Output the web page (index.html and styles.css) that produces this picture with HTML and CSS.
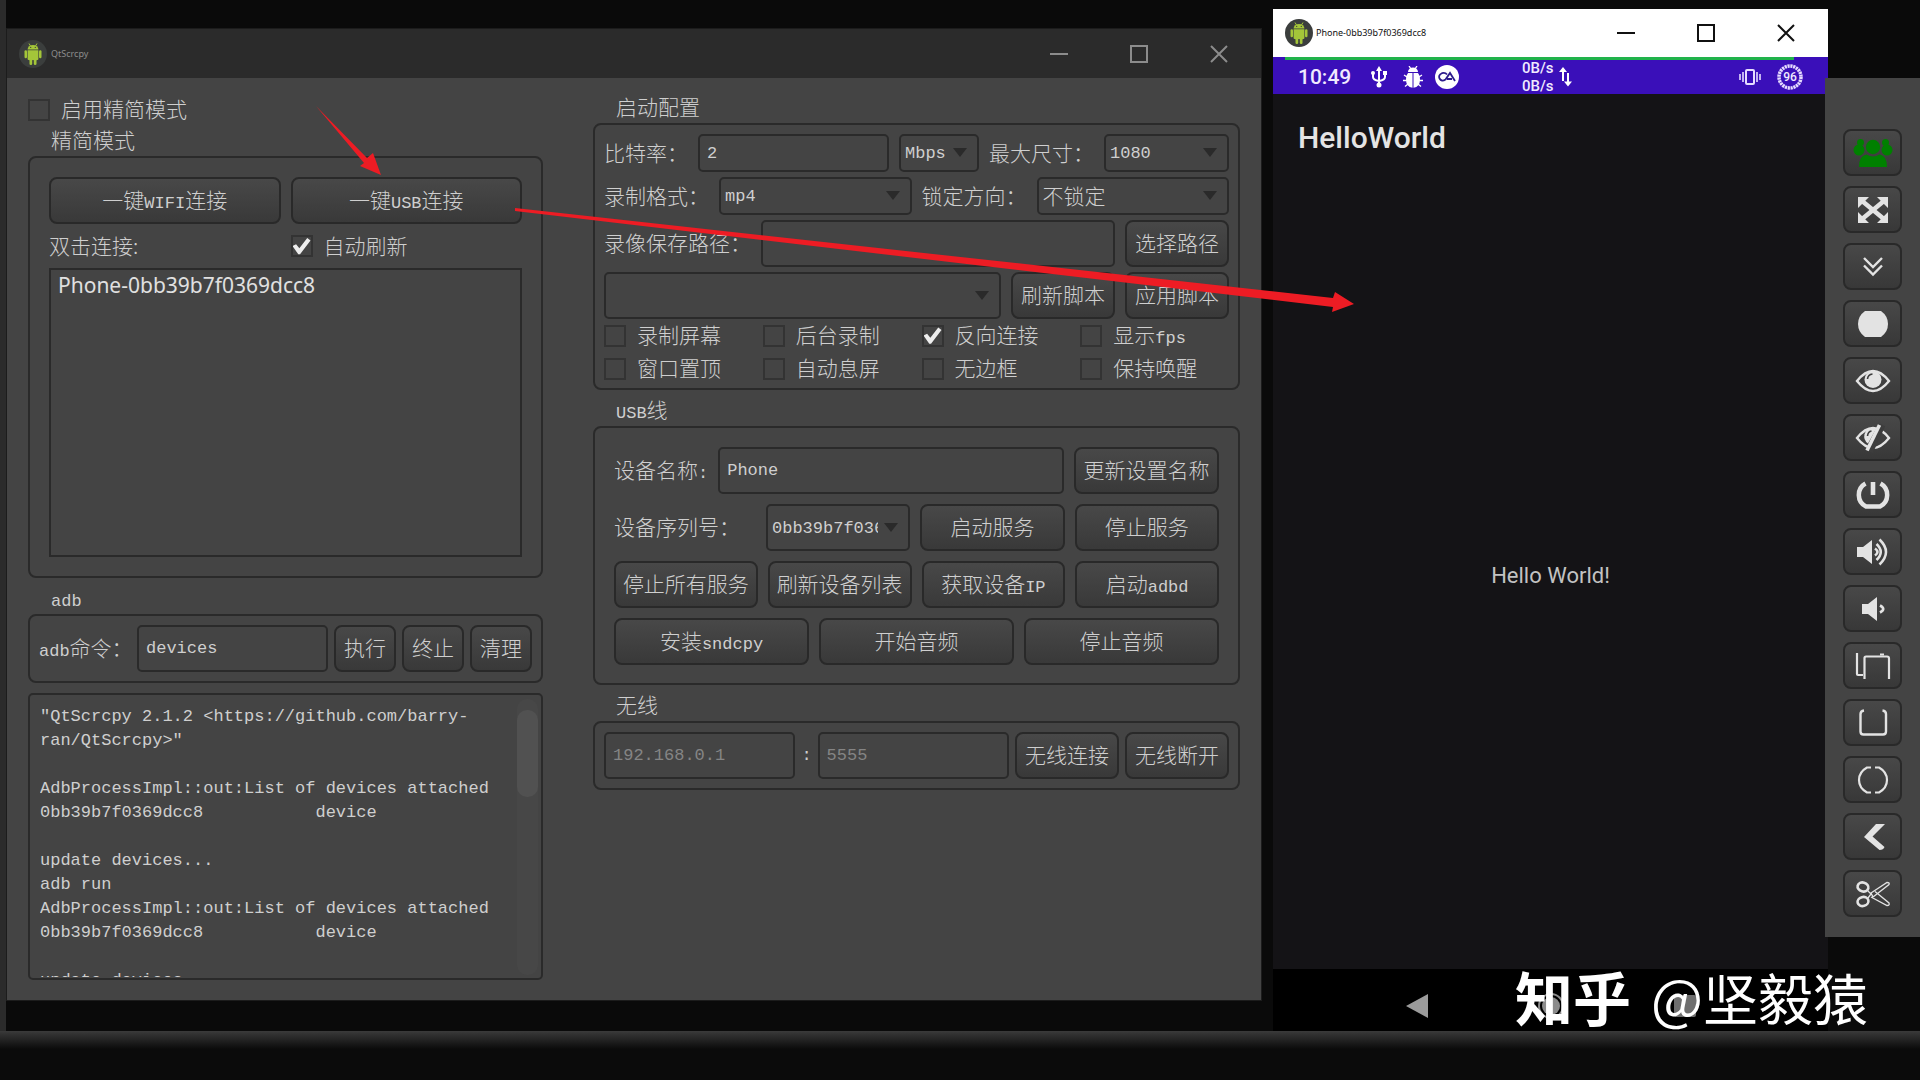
FILE: index.html
```html
<!DOCTYPE html>
<html lang="zh-CN">
<head>
<meta charset="utf-8">
<meta name="viewport" content="width=device-width, initial-scale=1">
<title>QtScrcpy</title>
<link rel="stylesheet" href="styles.css">
</head>
<body>
<svg class="defs" aria-hidden="true">
  <symbol id="android" viewBox="0 0 28 28">
    <circle cx="14" cy="14" r="14" fill="#3b3e3d"/>
    <g fill="#a4c639">
      <path d="M8.600 9.500a5.400 4.600 0 0 1 10.800 0z"/>
      <path d="M10 3.500l1.500 2.500M18 3.500l-1.500 2.500" stroke="#a4c639" stroke-width="1"/>
      <path d="M8.600 10.300h10.800v8.700a1 1 0 0 1-1 1h-8.800a1 1 0 0 1-1-1z"/>
      <rect x="5.500" y="10.300" width="2.500" height="8" rx="1.200"/>
      <rect x="20" y="10.300" width="2.500" height="8" rx="1.200"/>
      <rect x="10.500" y="19" width="2.700" height="6" rx="1.300"/>
      <rect x="14.800" y="19" width="2.700" height="6" rx="1.300"/>
    </g>
    <circle cx="11.700" cy="7.400" r=".6" fill="#3b3e3d"/><circle cx="16.300" cy="7.400" r=".6" fill="#3b3e3d"/>
  </symbol>
  <symbol id="win-min" viewBox="0 0 20 20"><path d="M1 10h18" stroke="currentColor" stroke-width="2"/></symbol>
  <symbol id="win-max" viewBox="0 0 20 20"><path d="M2 2h16v16H2z" fill="none" stroke="currentColor" stroke-width="2"/></symbol>
  <symbol id="win-close" viewBox="0 0 20 20"><path d="M2 2l16 16M18 2L2 18" stroke="currentColor" stroke-width="2"/></symbol>
</svg>

<div class="desktop">
  <main class="window main-window">
    <header class="titlebar">
      <svg class="app-icon"><use href="#android"/></svg>
      <h1 class="win-title">QtScrcpy</h1>
      <div class="win-buttons">
        <button aria-label="最小化"><svg><use href="#win-min"/></svg></button>
        <button aria-label="最大化"><svg><use href="#win-max"/></svg></button>
        <button aria-label="关闭"><svg><use href="#win-close"/></svg></button>
      </div>
    </header>
    <div class="content">
      <div class="column">
        <label class="check simple-check"><input type="checkbox"><span>启用精简模式</span></label>
        <h2 class="caption">精简模式</h2>
        <section class="group roomy simple">
          <div class="row wide">
            <button class="btn grow">一键<span class="lat">WIFI</span>连接</button>
            <button class="btn grow">一键<span class="lat">USB</span>连接</button>
          </div>
          <div class="row connect">
            <span class="half">双击连接<span>:</span></span>
            <label class="check half"><input type="checkbox" checked><span>自动刷新</span></label>
          </div>
          <ul class="devices"><li>Phone-0bb39b7f0369dcc8</li></ul>
        </section>
        <h2 class="caption spaced"><span class="lat">adb</span></h2>
        <section class="group">
          <div class="row tight">
            <label class="adb-label" for="cmd"><span class="lat">adb</span>命令：</label>
            <input class="field grow" id="cmd" type="text" value="devices">
            <button class="btn small">执行</button>
            <button class="btn small">终止</button>
            <button class="btn small">清理</button>
          </div>
        </section>
        <div class="log">
          <div class="log-text">"QtScrcpy 2.1.2 &lt;https://github.com/barry-ran/QtScrcpy&gt;"

AdbProcessImpl::out:List of devices attached
0bb39b7f0369dcc8           device

update devices...
adb run
AdbProcessImpl::out:List of devices attached
0bb39b7f0369dcc8           device

update devices...</div>
          <div class="track"><div class="thumb"></div></div>
        </div>
      </div>

      <div class="column">
        <h2 class="caption">启动配置</h2>
        <section class="group config">
          <div class="row low">
            <label for="rate">比特率：</label>
            <input class="field grow" id="rate" type="text" value="2">
            <div class="select unit"><select aria-label="单位"><option>Mbps</option></select></div>
            <label for="size">最大尺寸：</label>
            <div class="select size"><select id="size"><option>1080</option></select></div>
          </div>
          <div class="row low">
            <label for="format">录制格式：</label>
            <div class="select grow"><select id="format"><option>mp4</option></select></div>
            <label for="lock">锁定方向：</label>
            <div class="select grow"><select id="lock" class="cjk"><option>不锁定</option></select></div>
          </div>
          <div class="row">
            <label for="path">录像保存路径：</label>
            <input class="field grow" id="path" type="text">
            <button class="btn medium">选择路径</button>
          </div>
          <div class="row">
            <div class="select grow"><select aria-label="脚本"><option></option></select></div>
            <button class="btn medium">刷新脚本</button>
            <button class="btn medium">应用脚本</button>
          </div>
          <div class="checks">
            <label class="check"><input type="checkbox"><span>录制屏幕</span></label>
            <label class="check"><input type="checkbox"><span>后台录制</span></label>
            <label class="check"><input type="checkbox" checked><span>反向连接</span></label>
            <label class="check"><input type="checkbox"><span>显示<span class="lat">fps</span></span></label>
            <label class="check"><input type="checkbox"><span>窗口置顶</span></label>
            <label class="check"><input type="checkbox"><span>自动息屏</span></label>
            <label class="check"><input type="checkbox"><span>无边框</span></label>
            <label class="check"><input type="checkbox"><span>保持唤醒</span></label>
          </div>
        </section>

        <h2 class="caption spaced"><span class="lat">USB</span>线</h2>
        <section class="group roomy usb">
          <div class="row">
            <label for="name">设备名称<span class="lat">:</span></label>
            <input class="field grow" id="name" type="text" value="Phone">
            <button class="btn large">更新设置名称</button>
          </div>
          <div class="row">
            <label class="serial-label" for="serial">设备序列号：</label>
            <div class="select grow serial"><select id="serial"><option>0bb39b7f0369dcc8</option></select></div>
            <button class="btn grow">启动服务</button>
            <button class="btn grow">停止服务</button>
          </div>
          <div class="row">
            <button class="btn grow">停止所有服务</button>
            <button class="btn grow">刷新设备列表</button>
            <button class="btn grow">获取设备<span class="lat">IP</span></button>
            <button class="btn grow">启动<span class="lat">adbd</span></button>
          </div>
          <div class="row">
            <button class="btn grow">安装<span class="lat">sndcpy</span></button>
            <button class="btn grow">开始音频</button>
            <button class="btn grow">停止音频</button>
          </div>
        </section>

        <h2 class="caption spaced">无线</h2>
        <section class="group">
          <div class="row tight">
            <input class="field grow" type="text" placeholder="192.168.0.1" aria-label="IP">
            <span class="lat">:</span>
            <input class="field grow" type="text" placeholder="5555" aria-label="端口">
            <button class="btn medium">无线连接</button>
            <button class="btn medium">无线断开</button>
          </div>
        </section>
      </div>
    </div>
  </main>

  <section class="window phone">
    <header class="titlebar light">
      <svg class="app-icon"><use href="#android"/></svg>
      <h1 class="win-title">Phone-0bb39b7f0369dcc8</h1>
      <div class="win-buttons">
        <button aria-label="最小化"><svg><use href="#win-min"/></svg></button>
        <button aria-label="最大化"><svg><use href="#win-max"/></svg></button>
        <button aria-label="关闭"><svg><use href="#win-close"/></svg></button>
      </div>
    </header>
    <div class="progress"><div class="bar"></div></div>
    <div class="status">
      <span class="clock">10:49</span>
      <svg class="st-icon usb-icon" viewBox="0 0 16 22"><g fill="none" stroke="#fff" stroke-width="2"><path d="M8 3v16M2 7v4q0 3 6 4M14 7v4q0 3-6 4"/></g><path d="M8 0l3 5H5z" fill="#fff"/><circle cx="2" cy="7" r="2" fill="#fff"/><path d="M12 5h4v4h-4z" fill="#fff"/><circle cx="8" cy="19" r="2.500" fill="#fff"/></svg>
      <svg class="st-icon bug-icon" viewBox="0 0 20 22"><path d="M1 9l3 2M0 14.500h4M2 20.500l3-2.500M19 9l-3 2M20 14.500h-4M18 20.500l-3-2.500M6 0l2 3M14 0l-2 3" stroke="#fff" stroke-width="1.300"/><path d="M5 6a5 4.500 0 0 1 10 0z" fill="#fff"/><path d="M9.500 7v14.800Q3 21 3 13.500Q3 9 5 7zM10.500 7v14.800Q17 21 17 13.500Q17 9 15 7z" fill="#fff"/></svg>
      <svg class="st-icon ca-icon" viewBox="0 0 24 24"><circle cx="12" cy="12" r="12" fill="#fff"/><path d="M12 9.500Q10 7 7 8.200Q3 10 4.500 13.500Q6.500 17 10.500 14.500L15 8L20 16M12 14h5" fill="none" stroke="#2c1b8c" stroke-width="1.800"/></svg>
      <span class="speed"><span>0B/s</span><span>0B/s</span></span>
      <svg class="st-icon arrows-icon" viewBox="0 0 13 20"><path d="M4 5v9M9 6v9" stroke="#fff" stroke-width="2"/><path d="M0 5l4-5 4 5zM5 14.500l4 5 4-5z" fill="#fff"/></svg>
      <svg class="st-icon vib-icon" viewBox="0 0 22 16"><rect x="7" y="1" width="8" height="14" rx="1" fill="none" stroke="#e6dcff" stroke-width="2"/><path d="M4 3v10M1 5v6M18 3v10M21 5v6" stroke="#e6dcff" stroke-width="1.600"/></svg>
      <svg class="st-icon bat-icon" viewBox="0 0 26 26"><circle cx="13" cy="13" r="11" fill="none" stroke="#e6dcff" stroke-width="3.500" stroke-dasharray="2.200 .680"/><text x="13" y="17" text-anchor="middle" class="bat-text">96</text></svg>
    </div>
    <h2 class="app-title">HelloWorld</h2>
    <div class="app-body"><p>Hello World!</p></div>
    <nav class="nav">
      <button aria-label="返回"><svg viewBox="0 0 26 26"><path d="M24 1v24L2 13z" fill="#9b9b9b"/></svg></button>
      <button aria-label="主页"><svg viewBox="0 0 26 26"><circle cx="13" cy="13" r="12" fill="none" stroke="#8b8b8b" stroke-width="2"/><circle cx="13" cy="13" r="9" fill="#8b8b8b"/></svg></button>
      <button aria-label="最近"><svg viewBox="0 0 26 26"><rect x="2" y="2" width="22" height="22" rx="2" fill="#6e6e6e"/></svg></button>
    </nav>
  </section>

  <aside class="tools">
    <button class="btn tool" aria-label="群控"><svg viewBox="0 0 40 32"><g fill="#008000"><circle cx="7.500" cy="5.500" r="3.500"/><circle cx="32.500" cy="5.500" r="3.500"/><circle cx="6" cy="13" r="5.500"/><circle cx="34" cy="13" r="5.500"/><circle cx="20" cy="10" r="7.200"/><path d="M6 30Q6 18.500 13.500 17.500Q20 21.500 26.500 17.500Q34 18.500 34 30z"/></g></svg></button>
    <button class="btn tool" aria-label="全屏"><svg viewBox="0 0 40 32"><path d="M8.500 6.500l23 19M31.500 6.500l-23 19" stroke="#e3e3e3" stroke-width="4.500"/><path d="M5 3h11L5 14zM35 3H24l11 11zM5 29h11L5 18zM35 29H24l11-11z" fill="#e3e3e3"/></svg></button>
    <button class="btn tool" aria-label="展开通知"><svg viewBox="0 0 40 32"><path d="M11 7l9 9 9-9M11 14.500l9 9 9-9" fill="none" stroke="#e3e3e3" stroke-width="2.400"/></svg></button>
    <button class="btn tool" aria-label="触摸"><svg viewBox="0 0 40 32"><path d="M12 3h16Q35 8 35 16T28 29H12Q5 24 5 16T12 3z" fill="#e3e3e3"/></svg></button>
    <button class="btn tool" aria-label="亮屏"><svg viewBox="0 0 40 32"><path d="M4 16Q20-4 36 16Q20 36 4 16z" fill="none" stroke="#e3e3e3" stroke-width="2.400"/><circle cx="20" cy="14.500" r="8.500" fill="#e3e3e3"/><path d="M14.500 14q.5-4.500 5-5" fill="none" stroke="#3d3d3d" stroke-width="1.600"/></svg></button>
    <button class="btn tool" aria-label="熄屏"><svg viewBox="0 0 40 32"><path d="M4 16Q20-4 36 16Q20 36 4 16z" fill="none" stroke="#e3e3e3" stroke-width="2.400"/><path d="M19 6a8.500 8.500 0 0 0-4 15.500L23 7z" fill="#e3e3e3"/><path d="M14.500 14q.5-4.500 4-5" fill="none" stroke="#3d3d3d" stroke-width="1.600"/><path d="M29.500 3L17 30" stroke="#3d3d3d" stroke-width="6"/><path d="M26.500 3L14 28.500" stroke="#e3e3e3" stroke-width="3.600"/></svg></button>
    <button class="btn tool" aria-label="电源"><svg viewBox="0 0 40 32"><path d="M12.500 4.500A13 13 0 0 0 13 27.500h14A13 13 0 0 0 27.500 4.500" fill="none" stroke="#e3e3e3" stroke-width="4.500"/><path d="M20 3v13" stroke="#e3e3e3" stroke-width="4.600"/></svg></button>
    <button class="btn tool" aria-label="音量加"><svg viewBox="0 0 40 32"><path d="M4 11h6l9-7v24l-9-7H4z" fill="#e3e3e3"/><path d="M22 12.500q5 3.500 0 7M23.500 8q8.500 8 0 16M26.500 3.500Q39.500 16 26.500 28.500" fill="none" stroke="#e3e3e3" stroke-width="2.600"/></svg></button>
    <button class="btn tool" aria-label="音量减"><svg viewBox="0 0 40 32"><path d="M9 11h6l9-7v24l-9-7H9z" fill="#e3e3e3"/><path d="M27 12.500q6.500 3.500 0 7" fill="none" stroke="#e3e3e3" stroke-width="2.600"/></svg></button>
    <button class="btn tool" aria-label="切换应用"><svg viewBox="0 0 40 32"><path d="M4 3v21q0 1 1 1h5M11.500 29V8q0-1.500 1.500-1.500h21q2 0 2 2V29" fill="none" stroke="#e3e3e3" stroke-width="2.200"/><path d="M27 4.500h4" stroke="#e3e3e3" stroke-width="2"/></svg></button>
    <button class="btn tool" aria-label="菜单"><svg viewBox="0 0 40 32"><path d="M11 3.500Q7.500 4 7.500 7v17.500q0 3 3 3h19.500q3 0 3-3V7q0-3-3.500-3.500" fill="none" stroke="#e3e3e3" stroke-width="2.400"/></svg></button>
    <button class="btn tool" aria-label="主页"><svg viewBox="0 0 40 32"><path d="M18 3.500h-4Q6 8 6 16t8 12.500h4M22 3.500h4Q34 8 34 16t-8 12.500h-4" fill="none" stroke="#e3e3e3" stroke-width="2.200"/></svg></button>
    <button class="btn tool" aria-label="返回"><svg viewBox="0 0 40 32"><path d="M23 3h9L19.500 15.500l12 10.500q-1 3-5 3L11 16z" fill="#e3e3e3"/></svg></button>
    <button class="btn tool" aria-label="截图"><svg viewBox="0 0 40 32"><g fill="none" stroke="#e3e3e3"><ellipse cx="10" cy="9" rx="5.500" ry="4.500" stroke-width="2.600" transform="rotate(15 10 9)"/><ellipse cx="10" cy="23.500" rx="5.500" ry="4.500" stroke-width="2.600" transform="rotate(-15 10 23.500)"/><path d="M15 13l3 3-3 4M18 15L34 4.500q3 0 2 2L20 19zM22 13.500L36 25q1 2.500-2 2.500L18 19" stroke-width="1.300"/></g></svg></button>
  </aside>
</div>
<div class="desk-shade"></div>

<svg class="annotations" viewBox="0 0 1920 1080" aria-hidden="true">
  <path d="M316 106L367 158L373 153L381 175L360 166L364 163Z" fill="#ed1c24"/>
  <path d="M515 208L1333 298L1335 292L1354 304L1332 312L1333 307L515 211Z" fill="#ed1c24"/>
</svg>
<div class="watermark"><span class="brand">知乎</span><span>@坚毅猿</span></div>
</body>
</html>
```
FILE: styles.css
```css
* { box-sizing: border-box; }

body {
  margin: 0;
  min-height: 100vh;
  position: relative;
  overflow: hidden;
  background: #0b0b0b;
  color: #cfcfcf;
  font: 300 21px/24px "Noto Sans CJK SC", sans-serif;
}

h1, h2, p, ul { margin: 0; padding: 0; font-weight: inherit; }
ul { list-style: none; }
button, input, select { font: inherit; color: inherit; margin: 0; }
.defs { display: none; }

/* desktop */
.desktop {
  display: grid;
  grid-template-columns: minmax(0, 1254fr) minmax(0, 567fr) 92px;
  min-height: calc(100vh - 49px);
  padding-left: 7px;
  background: linear-gradient(90deg, #2b2b2b 6px, #0a0a0a 6px);
}
.desk-shade { height: 49px; background: linear-gradient(#3a3a3a, #0b0b0b 18px); }

.window { display: flex; flex-direction: column; }
.main-window { margin: 29px 0 31px; background: #444; box-shadow: 0 0 0 1px #1c1c1c; }

.titlebar {
  display: flex;
  align-items: center;
  height: 49px;
  padding-left: 12px;
  background: #2b2b2b;
  color: #8c8c8c;
}
.app-icon { width: 28px; height: 28px; margin-right: 4px; }
.win-title { flex: 1; font: 9px/14px "Noto Sans", sans-serif; }
.win-buttons { display: flex; gap: 60px; padding-right: 32px; }
.win-buttons button { width: 20px; height: 20px; padding: 0; border: 0; background: none; }
.win-buttons svg { display: block; width: 20px; height: 20px; }

/* main window */
.content {
  flex: 1;
  display: grid;
  grid-template-columns: minmax(0, 515fr) minmax(0, 647fr);
  column-gap: 50px;
  padding: 15px 21px 20px;
}
.column { display: flex; flex-direction: column; }
.caption { height: 30px; padding-left: 23px; font-size: 21px; line-height: 26px; }
.spaced { margin-top: 6px; }

.lat, .field, select, .log { font-family: "Liberation Mono", monospace; font-size: 17px; }
.lat { line-height: 0; }
select.cjk { font-family: "Noto Sans CJK SC", sans-serif; font-size: 21px; }

.group { padding: 9px; border: 2px solid #2a2a2a; border-radius: 8px; }
.roomy { padding: 19px; }
.config { display: flex; flex-direction: column; gap: 5px; padding-bottom: 3px; }
.usb { display: flex; flex-direction: column; gap: 10px; padding-bottom: 18px; }

.row { display: flex; align-items: center; gap: 10px; height: 47px; white-space: nowrap; }
.low { height: 38px; }
.tight { gap: 6px; }
.grow { flex: 1 1 0; min-width: 0; }
.half { flex: 1; }
.connect { height: 44px; }
.adb-label { width: 92px; }
.serial-label { width: 142px; }
.row > label:not(.check), .check span, .row > .half:not(.check) { padding-bottom: 3px; }

.btn {
  height: 47px;
  padding: 0 0 3px;
  border: 2px solid #292929;
  border-radius: 8px;
  background: linear-gradient(#484848, #393939);
  white-space: nowrap;
}
.small { width: 62px; }
.medium { width: 104px; }
.large { width: 145px; }

.field, .select {
  height: 100%;
  border: 2px solid #2a2a2a;
  border-radius: 5px;
  background: #444;
}
.field { padding: 0 7px; outline: 0; }
.field::placeholder { color: #858585; opacity: 1; }

.select { position: relative; }
.select select {
  width: 100%;
  height: 100%;
  padding: 2px 30px 0 4px;
  border: 0;
  appearance: none;
  background: none;
  outline: 0;
}
.select select.cjk { padding-top: 0; padding-bottom: 2px; }
.select::after {
  content: "";
  position: absolute;
  right: 10px;
  top: calc(50% - 5px);
  border: 7px solid transparent;
  border-top: 9px solid #2a2a2a;
  border-bottom: 0;
}
.unit { width: 80px; }
.size { width: 125px; }

.check { display: flex; align-items: center; gap: 11px; white-space: nowrap; }
.check input {
  appearance: none;
  width: 22px;
  height: 22px;
  border: 2px solid #333;
  background: #444;
}
.check input:checked::before {
  content: "";
  display: block;
  width: 18px;
  height: 18px;
  background: #eee;
  clip-path: polygon(0 50%, 20% 40%, 38% 62%, 82% 6%, 100% 20%, 42% 96%, 32% 96%);
}
.simple-check { height: 33px; }
.checks {
  display: grid;
  grid-template-columns: repeat(4, 1fr);
  grid-auto-rows: 33px;
  margin: -5px -10px 0 0;
}

.devices {
  height: 289px;
  padding: 2px 7px;
  border: 2px solid #2a2a2a;
  font: 21px/26px "Noto Sans", sans-serif;
  color: #e0e0e0;
}

.log {
  display: flex;
  flex: 1 1 240px;
  min-height: 0;
  margin-top: 10px;
  padding: 0 3px 3px 10px;
  border: 2px solid #2a2a2a;
  border-radius: 5px;
}
.log-text {
  flex: 1;
  height: 282px;
  padding-top: 10px;
  overflow: hidden;
  white-space: pre-wrap;
}
.track { width: 21px; margin-top: 4px; padding-top: 11px; border-radius: 10px; background: #474747; }
.thumb { height: 87px; border-radius: 10px; background: #515151; }

/* phone window */
.phone {
  margin: 9px 0 0 12px;
  background: #141316;
  color: #e4e4e4;
  font-family: Roboto, sans-serif;
  font-weight: 400;
}
.light { height: 48px; background: #fff; color: #111; }
.light .app-icon { margin-right: 3px; }
.progress { height: 3px; padding: 0 34px 0 12px; background: #3a0fb9; }
.bar { height: 3px; background: #21b34b; }
.status {
  display: flex;
  align-items: center;
  height: 34px;
  padding: 0 25px;
  background: #3a0fb9;
  color: #f0eaff;
}
.st-icon { flex: none; }
.clock { width: 73px; font-size: 21px; font-weight: 500; }
.usb-icon { width: 16px; height: 22px; margin-right: 16px; }
.bug-icon { width: 20px; height: 22px; margin-right: 12px; }
.ca-icon { width: 24px; height: 24px; }
.speed { display: flex; flex-direction: column; margin-left: 63px; font-size: 15px; line-height: 18px; font-weight: 500; }
.arrows-icon { width: 13px; height: 20px; margin: 0 auto 0 5px; }
.vib-icon { width: 22px; height: 16px; margin-right: 16px; }
.bat-icon { width: 26px; height: 26px; }
.bat-text { fill: #f0eaff; font: 500 12px Roboto, sans-serif; }

.app-title { height: 88px; padding-left: 25px; font-size: 30px; line-height: 88px; font-weight: 500; }
.app-body { flex: 1; display: grid; place-items: center; font-size: 22px; color: #c2c2c2; }
.nav {
  display: flex;
  justify-content: center;
  gap: 108px;
  height: 62px;
  padding-top: 24px;
  background: #000;
}
.nav button { width: 26px; height: 26px; padding: 0; border: 0; background: none; }
.nav svg { display: block; width: 26px; height: 26px; }

/* side tools */
.tools {
  display: flex;
  flex-direction: column;
  align-items: center;
  align-self: start;
  gap: 10px;
  margin: 78px 0 0 -3px;
  padding: 51px 0 20px;
  background: #444;
  position: relative;
}
.tool { display: grid; place-items: center; width: 59px; padding: 0; background: linear-gradient(#484848, #383838); }
.tool svg { width: 40px; height: 32px; }

/* overlays */
.annotations { position: absolute; inset: 0; width: 100%; pointer-events: none; }
.watermark {
  position: absolute;
  right: 52px;
  bottom: 48px;
  display: flex;
  align-items: center;
  gap: 20px;
  color: #fff;
  font-size: 55px;
  line-height: 72px;
  font-weight: 400;
}
.brand { font-size: 58px; font-weight: 700; }
```
